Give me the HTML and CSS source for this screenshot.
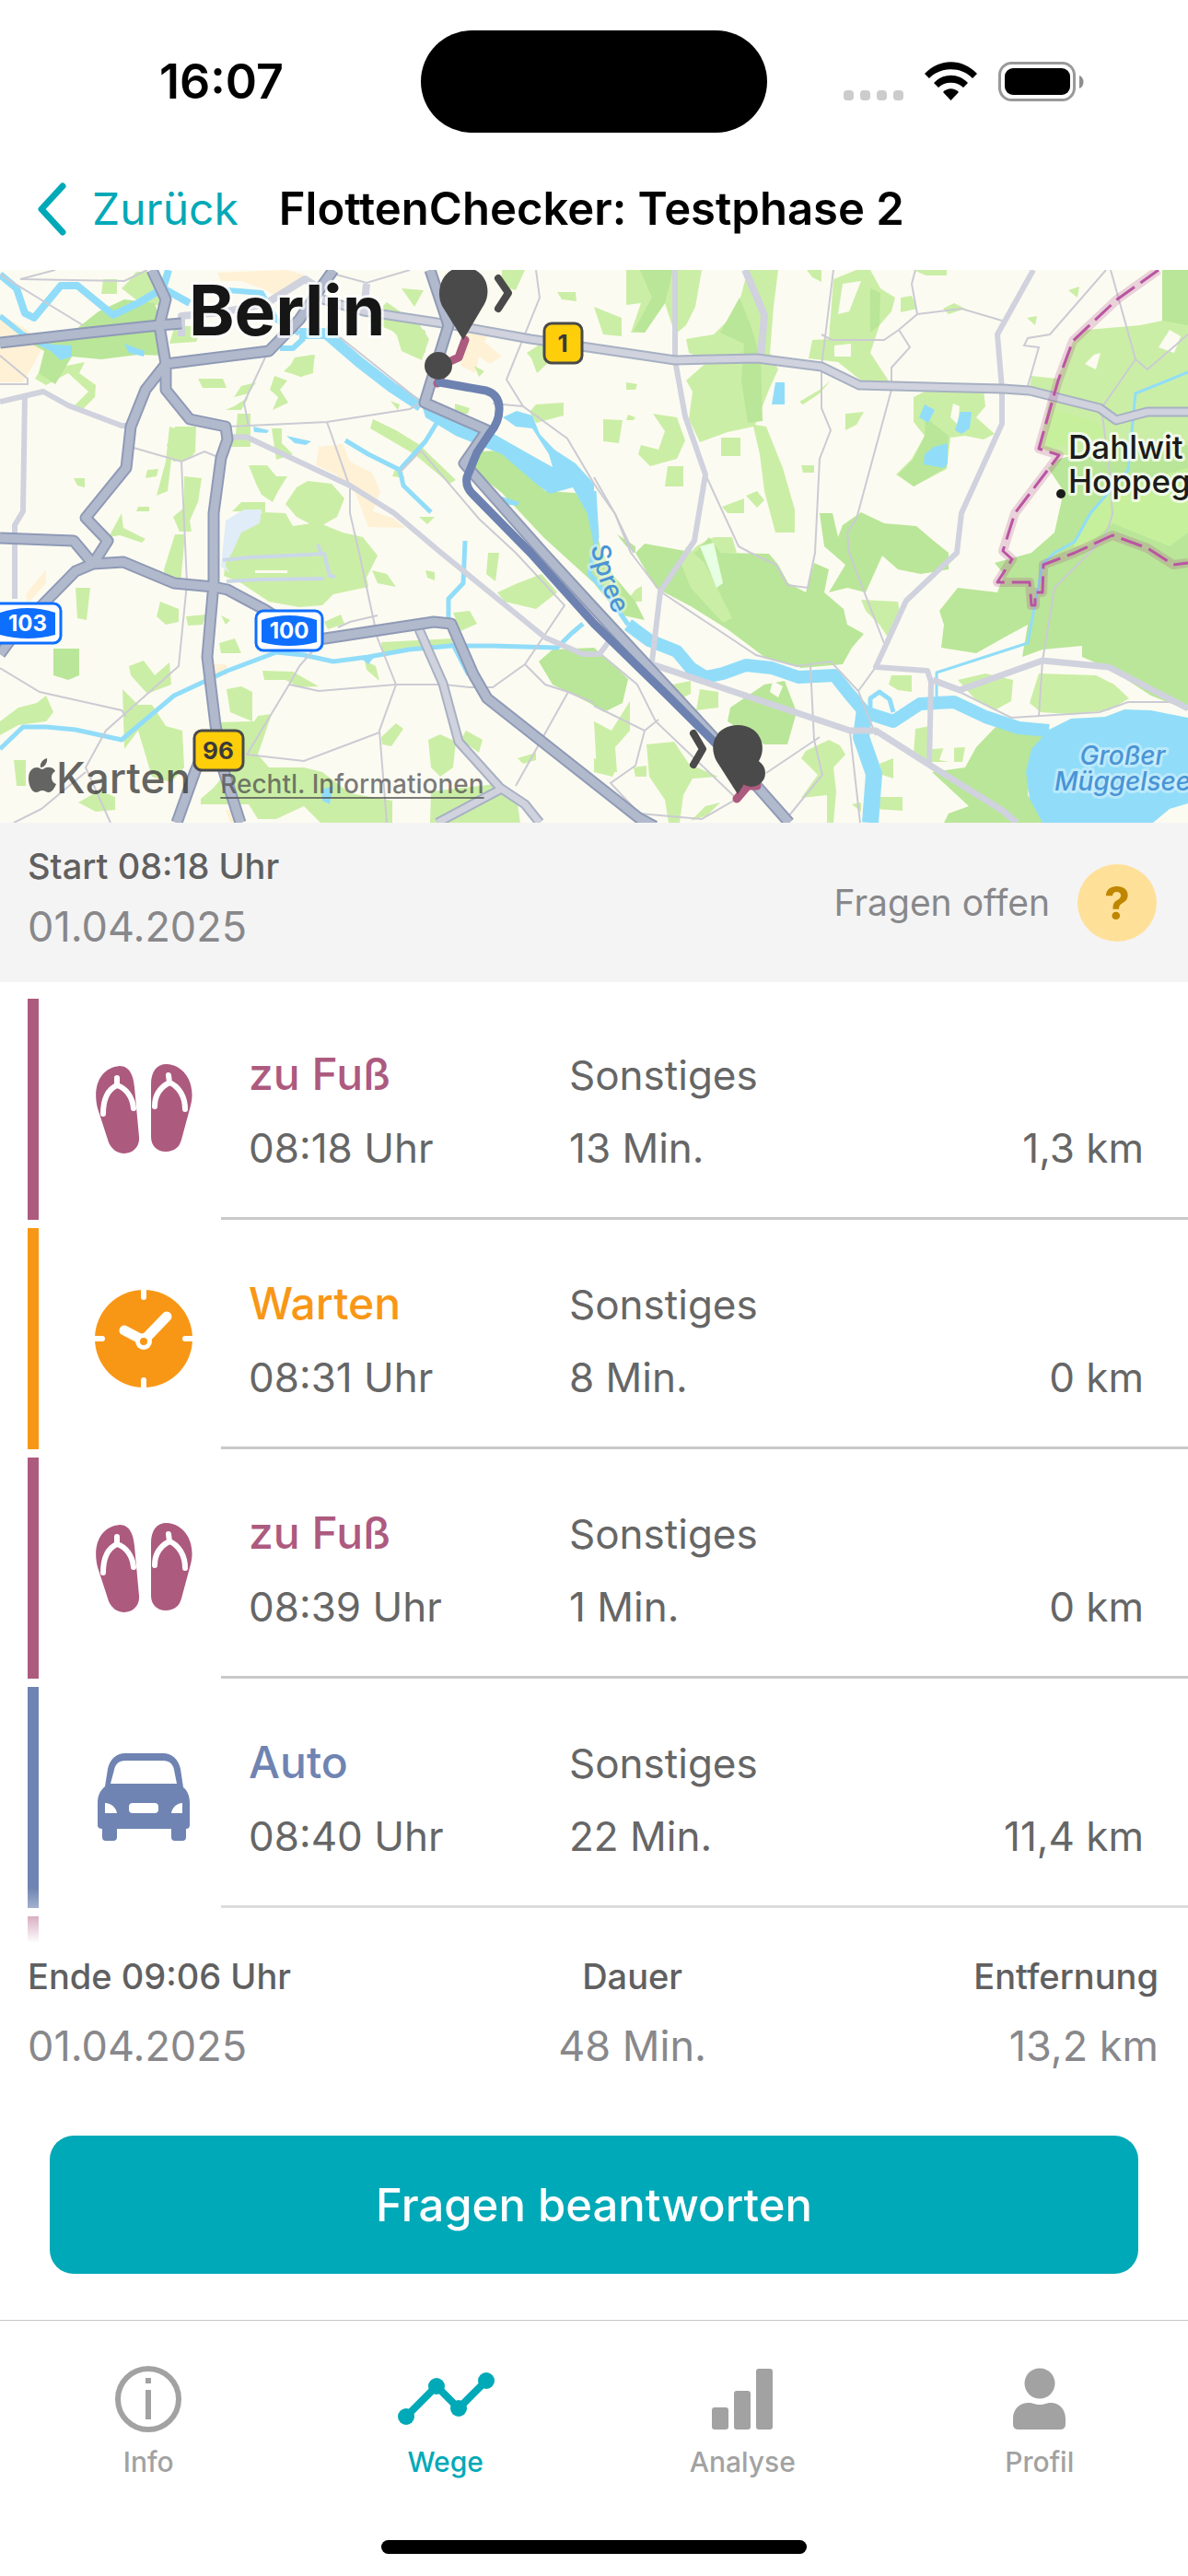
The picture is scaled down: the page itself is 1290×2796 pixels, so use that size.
FILE: index.html
```html
<!DOCTYPE html>
<html lang="de">
<head>
    <meta charset="UTF-8">
    <meta name="viewport" content="width=device-width, initial-scale=1">
    <title>FlottenChecker: Testphase 2</title>
    <link rel="stylesheet" href="styles.css">
</head>
<body>
    <!-- shared icons -->
    <svg class="sprite" aria-hidden="true">
        <symbol id="icon-shoes" viewBox="0 0 106 98">
            <path fill="currentColor" d="M27 2C38 2 42 13 43 25L48 79C49 90 41 97 32 97C24 97 18 92 15 85L3 48C-3 24 6 4 27 2Z"/>
            <path fill="currentColor" d="M78 0C67 0 61 8 61 22V79C61 89 68 95 77 95C86 95 92 90 94 82L104 45C110 22 98 1 78 0Z"/>
            <g fill="none" stroke="#fff" stroke-width="6" stroke-linecap="round" stroke-linejoin="round">
                <path d="M24 15V23C13 28 9 40 9 54M24 23C34 26 41 36 42 48"/>
                <path d="M80 12L81 20C71 25 65 34 65 46M81 20C91 24 98 35 98 49"/>
            </g>
        </symbol>
        <symbol id="icon-clock" viewBox="0 0 106 106">
            <circle cx="53" cy="53" r="53" fill="currentColor"/>
            <g fill="none" stroke="#fff" stroke-linecap="round">
                <path stroke-width="6" d="M53 -4V8M53 98V110M-4 53H8M98 53H110"/>
                <path stroke-width="11" d="M53 55L32 44M53 55L78 29"/>
            </g>
            <circle cx="53" cy="56" r="9" fill="#fff"/>
            <circle cx="53" cy="56" r="4" fill="currentColor"/>
        </symbol>
        <symbol id="icon-car" viewBox="0 0 100 96">
            <path fill="currentColor" fill-rule="evenodd" d="M30 0H71C81 0 88 7 90 17L93 37C98 41 100 47 100 54V78Q100 82 96 82V91Q96 95 92 95H84Q80 95 80 91V82H21V91Q21 95 17 95H9Q5 95 5 91V82Q0 82 0 78V54C0 47 2 41 8 36L11 17C13 7 20 0 30 0ZM30 8C23 8 19 12 18 18L14 33H86L83 18C82 12 78 8 71 8ZM8 54V65H21C20 59 15 54 8 54ZM92 54V65H80C81 59 86 54 92 54ZM38 54Q34 54 34 58V61Q34 65 38 65H62Q66 65 66 61V58Q66 54 62 54Z"/>
        </symbol>
    </svg>

    <div class="app">
        <div class="status-bar">
            <span class="clock">16:07</span>
            <span class="island"></span>
            <svg class="status-icons" width="264" height="44" viewBox="0 0 264 44" aria-hidden="true">
                <g fill="#ccc">
                    <rect x="3" y="31" width="11" height="11" rx="4"/>
                    <rect x="21" y="31" width="11" height="11" rx="4"/>
                    <rect x="39" y="31" width="11" height="11" rx="4"/>
                    <rect x="57" y="31" width="11" height="11" rx="4"/>
                </g>
                <path d="M91 13C107-4 132-4 148 13L143 18C131 5 108 5 96 18Z"/>
                <path d="M101 23C111 12 128 12 138 23L133 28C126 21 113 21 106 28Z"/>
                <path d="M111 33C116 28 123 28 128 33L119.500 42Z"/>
                <rect x="172.500" y="1.500" width="81" height="40" rx="13" fill="none" stroke="#999" stroke-width="3"/>
                <rect x="178" y="7" width="71" height="29" rx="9"/>
                <path fill="#8e8e8e" d="M259 15C265 17 265 27 259 29Z"/>
            </svg>
        </div>

        <header class="nav-bar">
            <a class="back" href="#">
                <svg width="32" height="58" viewBox="0 0 32 58" aria-hidden="true"><path d="M28 4L5 29L28 54" fill="none" stroke="currentColor" stroke-width="7" stroke-linecap="round" stroke-linejoin="round"/></svg>
                Zurück
            </a>
            <h1>FlottenChecker: Testphase 2</h1>
        </header>

        <div class="map">
            <svg class="map-canvas" viewBox="0 0 1290 600" preserveAspectRatio="xMidYMid slice" role="img" aria-label="Karte">
                <rect width="1290" height="600" fill="#fcfbf1"/>

                <!-- built-up areas -->
                <g fill="#fff1d6">
                    <path d="M0 48L25 62L48 80L38 100L25 122H0Z"/>
                    <path d="M236 3L310 0L330 5L318 15L300 28L284 20L262 12L240 12Z"/>
                    <path d="M346 192L372 189L380 208L404 220L413 240L405 262L428 270L440 280L400 279L385 240L365 222L343 212Z"/>
                    <path d="M505 60L535 62L526 78L545 94L532 102L520 94L516 112L500 104Z"/>
                    <path d="M28 352L50 325L50 340L30 362Z"/>
                    <path d="M232 428H246V440H232ZM245 586H256V600H250Z"/>
                </g>

                <!-- light green -->
                <g fill="#cbeea6">
                    <path d="M112 10H127V26H110ZM148 2H165L180 40L150 34L132 20L140 12Z"/>
                    <path d="M190 60L220 62L213 78L184 80ZM340 92L320 95L312 110L326 116L340 112Z"/>
                    <path d="M43 110L92 100L86 112L104 125L103 138L88 153L78 150L96 132L74 112L50 125L38 118Z"/>
                    <path d="M215 118L242 118L246 128L220 128ZM262 126L278 122L270 134L254 138ZM254 148L270 138L262 152H245Z"/>
                    <path d="M298 115L312 120L304 130L313 144L296 152L302 138L293 130Z"/>
                    <path d="M324 95L342 92L340 108L328 116L308 110ZM395 40H410L462 66V90L440 80L420 60Z"/>
                    <path d="M258 156H272V192H243V178H256ZM295 172H306V188L318 200L300 206Z"/>
                    <path d="M190 170L213 170L212 198L204 206L188 208L181 190ZM180 208L184 170L190 172L182 240L170 245Z"/>
                    <path d="M200 224L219 226L215 252L206 272L208 284H195L188 268L200 258Z"/>
                    <path d="M270 212H290L300 224H312L302 240L296 252L284 244L278 232Z"/>
                    <path d="M322 236L334 229L360 232L374 248L366 268L345 280L322 268L310 254Z"/>
                    <path d="M252 262L262 252L288 252V263Z"/>
                    <path d="M285 263L310 264L318 278L345 274L372 285L394 290L410 310L398 334L400 344L362 352L350 364L325 366L292 360L262 340L243 332L247 300L262 280Z"/>
                    <path d="M132 264L134 280L158 292L154 296L130 288L118 290ZM150 257H162V262H148ZM80 226H92V236L84 234Z"/>
                    <path d="M160 217L172 216L170 224L158 226ZM190 287H201L196 340H180L178 325Z"/>
                    <path d="M82 345H98L94 380L84 378Z"/>
                    <path d="M174 360L194 368V382L180 385L170 376ZM140 430L156 424L168 440L184 426L186 450L160 460L142 440Z"/>
                    <path d="M133 455L150 472L165 472L180 495L198 500L200 540L186 556L165 550L150 500L135 520Z"/>
                    <path d="M246 455L262 452L274 458V490L250 480ZM285 435L318 436L346 452L325 453L310 445H287Z"/>
                    <path d="M238 491L276 490L280 484L295 482L280 526L292 540H330L350 545L380 568L426 576V600H348L330 582L300 596H280L270 580H218V574L232 562L246 545Z"/>
                    <path d="M0 490L20 475L40 470L50 462L58 480L50 490L20 494L0 505Z"/>
                    <path d="M15 532H28V560H18ZM85 578L108 565L125 572V586L104 588Z"/>
                    <path d="M202 376L224 374L220 385L204 386ZM240 375L250 380L245 385ZM352 382L370 374L374 384L356 390Z"/>
                    <path d="M404 326L420 330L430 344L410 340ZM462 326L472 328V337L464 334ZM396 424L408 430L412 446L398 434Z"/>
                    <path d="M414 404L492 400L490 408L415 416ZM238 405L255 400L262 416H240Z"/>
                    <path d="M468 566L538 558L562 580L565 600H467ZM414 507L430 492L438 498L425 517L415 515Z"/>
                    <path d="M465 510L478 504L495 512L492 540L478 550L468 540ZM506 500L524 510L520 524L500 510ZM562 530L582 524V532L568 536Z"/>
                    <path d="M492 372L510 370L518 384L500 392ZM540 350L562 340L588 330L605 350L582 368L548 360ZM530 307H542L538 338L528 330Z"/>
                    <path d="M420 35L456 60L466 75L458 98L436 88L430 68L400 55ZM436 20L460 22L450 40ZM405 162L430 174L456 190L470 204L495 228L488 232L450 200L402 172Z"/>
                    <path d="M424 142L434 146L432 152ZM494 145L510 150L508 156H494ZM515 104L526 110L520 116Z"/>
                    <path d="M430 214L440 226L426 224ZM455 268L472 268L464 276Z"/>
                    <path d="M545 0H570L560 22L545 18ZM605 24H625L626 34L610 32ZM582 146L612 144V158L582 166L575 154ZM572 90L600 72L590 90L596 100L583 112L577 96Z"/>
                    <path d="M645 40L675 52V72L655 70ZM655 162L676 163L672 188L655 186ZM680 122L692 124L690 130H680Z"/>
                    <path d="M680 0H745L762 0L755 40L745 60L733 70L722 36L700 68L685 68L696 36L680 38Z"/>
                    <path d="M709 156L735 160L744 185L735 205L706 213L693 200L696 190L715 195L722 175Z"/>
                    <path d="M725 213H742V235H722ZM783 182H804V202H783ZM682 157L690 160L688 163H680Z"/>
                    <path d="M745 75L775 70L800 45L812 0H845L840 40L836 90L845 108L835 130L820 168L832 170L850 215L863 260V285H842L830 240L825 200L818 170L790 176L760 187L748 162L752 132L745 120L770 98L748 90Z"/>
                    <path d="M905 10L930 0H945L956 20L972 30L968 45L955 60L945 90L968 125L935 120L910 100L878 96L882 76L900 75Z"/>
                    <path d="M876 0H892V13L882 8ZM978 30L990 28L996 42L978 46ZM992 0H1028V6H1005ZM1024 42L1036 36L1048 42L1030 48Z"/>
                    <path d="M918 156L938 154L930 168L918 174ZM870 212H884V220H872ZM868 143L890 130L902 120L890 134L872 146Z"/>
                    <path d="M784 257L808 248L808 264L790 264ZM810 245L822 240L830 250L822 258ZM756 300L775 290L795 290L800 307H750Z"/>
                    <path d="M992 138L1006 131H1068L1070 148L1060 160L1080 178L1068 184L1048 180L1032 182L1028 216L992 235L973 222L990 205L1004 180L992 165Z"/>
                    <path d="M1160 22L1172 18L1170 30ZM1115 52L1126 50L1124 60Z"/>
                    <path d="M1165 78L1180 65L1238 60L1262 55L1266 0H1290V210L1212 205L1145 200L1128 192L1140 140L1118 128L1120 115L1148 118Z"/>
                    <path d="M690 347L697 343V360H680ZM760 455L780 458L780 475L756 478ZM730 450L750 446V460L730 470Z"/>
                    <path d="M935 358L975 360L978 378L965 400L955 385L940 370ZM968 440L990 440V458L975 456L965 450Z"/>
                    <path d="M1040 445L1070 438L1100 445L1098 468L1080 478L1058 465Z"/>
                    <path d="M1128 438L1190 440L1210 450L1226 465L1204 478L1160 482L1130 480L1118 470ZM994 498L1010 495L1012 520L1048 518L1045 534H1010L992 525Z"/>
                    <path d="M645 490L664 500L684 468L684 500L668 518L670 545H648ZM645 530L670 540L665 550L645 545Z"/>
                    <path d="M702 515L732 512L748 536L780 550L752 552L742 570L738 600H726L722 575L705 550ZM688 540L702 538V550H690Z"/>
                    <path d="M875 522L900 510L912 516L918 526L905 540L908 566L905 600H898V570L870 573L888 548L870 530Z"/>
                    <path d="M955 536L970 530V552L958 548ZM952 572L980 572V587L950 585ZM925 580L935 578V588ZM766 582L782 578L768 592L750 598Z"/>
                </g>

                <!-- woods and parks -->
                <g fill="#b9e698">
                    <path d="M78 68L107 45L135 32L168 36L174 55L180 93L150 92L110 97L78 94L60 124L42 112L48 88L30 78L70 76Z"/>
                    <path d="M518 197L545 196L575 224L592 240L625 242L640 262L652 300L665 330L690 360L700 380L672 374L645 340L590 290L545 242L512 216Z"/>
                    <path d="M585 425L600 412L645 410L668 430L682 444L676 470L656 480L640 470L600 450Z"/>
                    <path d="M695 0H731L722 36L700 68L688 66L708 30ZM803 30L815 60L826 95L828 164L812 166L805 120L808 80L782 68ZM945 20L956 25L955 60L945 68Z"/>
                    <path d="M1005 160L1030 180L1028 214L992 235L975 222L992 205L1004 180ZM1262 0H1290V60L1262 55Z"/>
                    <path d="M690 307L700 297L755 307L770 290L782 307L835 308L845 320L856 340L875 350L884 318L900 325L895 350L916 368L920 385L938 395L925 410L915 428L870 432L830 420L790 390L750 365L712 345Z"/>
                    <path d="M915 277L935 263L960 275L995 278L1015 295L1030 307L1030 325L1000 330L975 325L958 310L940 350L920 345L900 350L918 320L895 300L890 264L904 264L910 290Z"/>
                    <path d="M1150 205L1215 190L1290 190V478L1250 462L1205 433L1175 420L1175 408L1132 412L1110 420L1116 385L1092 398L1060 416L1022 410L1025 385L1020 370L1040 345L1083 350L1090 330L1080 318L1120 307L1145 285L1155 240L1138 215Z"/>
                    <path d="M1012 545L1048 540L1060 518L1085 492L1100 500L1138 503L1120 530L1116 570L1135 600H1025L1030 590L1052 582Z"/>
                    <path d="M793 475L830 450L852 446L865 480L855 515L830 515L790 490ZM670 287L690 300L690 307L680 300Z"/>
                    <path d="M58 411H86V440L74 445L58 440Z"/>
                </g>
                <g fill="#c6f09c">
                    <path d="M1200 240L1290 215V285L1270 300L1208 275L1180 300L1165 300ZM1140 150L1190 165L1200 180L1135 195Z"/>
                    <path d="M745 300L765 318L795 378L785 383L750 345L740 320Z" fill="#cbeea6"/>
                </g>
                <path d="M839 446L850 452L845 464L836 458ZM1024 520L1036 512V535L1020 532Z" fill="#fcfbf1"/>
                <path d="M1270 65L1282 72L1275 90L1258 84ZM1188 92L1195 90L1190 108L1178 102ZM1035 145L1042 148L1040 168L1032 160Z" fill="#fcfbf1"/>
                <path d="M915 15L935 12L922 45L910 48ZM906 82L924 80V94H906Z" fill="#fcfbf1"/>
                <path d="M760 300L775 296L785 340L778 345Z" fill="#e7ffe2"/>

                <!-- Tempelhof field -->
                <path d="M245 272L265 260H284L282 275L262 285L252 307L244 320L250 330L240 322Z" fill="#e0ecf7"/>
                <path d="M242 315L270 312L314 310L352 308L358 332L364 333M246 338L283 336L352 335M345 298L350 310" fill="none" stroke="#cbd8e8" stroke-width="4"/>
                <path d="M277 326H312V329H277Z" fill="#fcfbf1"/>

                <!-- water -->
                <g fill="none" stroke="#91ddf9" stroke-width="6" stroke-linejoin="round">
                    <path stroke-width="8" d="M0 5L18 20L27 47L37 52L66 17H84L123 49L150 36L177 20L183 0M177 20L206 36"/>
                    <path d="M0 50L25 70L60 86M247 22L284 25L300 54L325 69M304 85H318L330 74"/>
                    <path stroke-width="12" d="M325 69H354L390 100L425 127L457 148"/>
                    <path stroke-width="5" d="M375 185L400 200L434 217L462 186L478 160M434 217L438 234L468 263M505 294L503 340L487 357V380"/>
                    <path stroke-width="14" d="M682 385L705 402L735 414L750 432L766 442L785 438L810 429L838 432L867 442L906 440L922 460L939 480L970 490L999 471L1036 469L1070 485L1106 497L1139 500"/>
                    <path stroke-width="18" d="M939 477L935 507L949 547L945 600"/>
                    <path stroke-width="5" d="M945 480L945 465L955 458L966 466L970 480"/>
                    <path stroke-width="5" d="M0 520L25 496H50L82 499L132 510L189 462L247 435L300 415L330 418L362 425L400 420L444 412L490 408L535 408L605 410L620 395L633 384"/>
                    <path stroke-width="3" d="M1290 111L1233 134L1225 217L1184 264L1167 295L1145 307L1132 319L1116 405L1017 437V464M490 405L508 440"/>
                    <path stroke-width="5" d="M645 240L648 290L640 330L658 350L682 385"/>
                </g>
                <g fill="#91ddf9">
                    <path d="M38 80L78 82V94L66 98L55 88ZM135 80L157 88L156 94L140 90Z"/>
                    <path d="M457 143L531 175L575 200L600 214L596 200L578 172L560 170L546 160L561 153L578 158L586 178L602 195L625 210L645 232V300L638 265L622 236L597 243L582 232L545 200L495 180L462 160Z"/>
                    <path d="M275 170L292 174L290 177L276 176ZM311 180L338 186L332 190L320 188ZM545 246L564 252L562 256L546 254Z"/>
                    <path d="M842 122H852V146H838ZM1004 146L1015 152L1008 166L998 160ZM1043 154H1055L1053 172L1044 178L1037 174ZM1014 192L1029 188V210L1025 215L1003 211L1004 200Z"/>
                    <path d="M349 564L362 560L358 580L350 576ZM390 420L408 418L400 428Z"/>
                    <path d="M1139 499L1163 487L1200 485L1221 477L1250 478L1290 486V579L1270 585L1252 600H1132L1118 574L1114 545L1120 520Z"/>
                </g>

                <!-- minor streets -->
                <g fill="none" stroke="#cbcbd4" stroke-width="2">
                    <path d="M0 5L90 60M22 10L60 0M22 10L135 12L160 0M0 93L30 118V124H0M365 5L398 14L445 0"/>
                    <path d="M288 95L265 144L270 170M247 170L355 165L445 151L460 143M355 165L380 236V264L390 307L410 400L430 450L412 500L420 600"/>
                    <path d="M145 193L197 208L222 197L234 202M197 208L203 340L194 430L115 500L93 540L120 600M0 432L43 458L132 478L137 485M45 585L93 545M15 600L45 585"/>
                    <path d="M354 61L457 143M457 196L520 270L560 307L613 364L570 428L535 453H510L482 450L430 450L346 457L314 450L268 526L330 533L412 502"/>
                    <path d="M457 196L435 219M314 450L325 430L340 413M367 388L380 382L410 375"/>
                    <path d="M582 0L586 30L550 119L568 148L616 183L645 232L668 265L688 307M535 145L568 148M570 428L592 450L617 458L645 470M617 458L560 560"/>
                    <path d="M905 0L892 105V150L902 174L890 205L885 307L877 345L855 342L843 320L815 307L802 300L766 222M892 70L903 76H960L976 65L996 48L990 15L994 0M996 48L1044 42L1088 55"/>
                    <path d="M976 65L988 84L968 106V130L930 270L920 285L922 307L960 405M1201 0L1140 70L1116 74L1112 82L1128 84L1116 126"/>
                    <path d="M1206 0L1233 97L1246 108L1290 70M1233 97L1196 150L1205 220L1208 265L1200 290L1145 345L1132 424L1128 485"/>
                    <path d="M717 349L821 418L865 430L902 425L932 457L951 505M880 430L884 510L893 548L857 592M932 457L951 431M923 502L934 600"/>
                    <path d="M650 415L692 450L712 490L800 574L762 596L694 590L663 557L690 538L700 500L645 473M832 546L890 507M700 500L715 488M1042 458L1098 486L1194 480L1225 469H1275"/>
                    <path d="M645 225L668 265L685 307M685 307L717 349"/>
                </g>

                <!-- secondary roads -->
                <g fill="none" stroke="#d0d2de" stroke-width="6" stroke-linejoin="round">
                    <path d="M0 143L47 132L74 147L132 169H140M27 135L25 262L16 277V357"/>
                    <path d="M247 182L267 181L380 234L428 264L479 307L592 399L633 417H651L665 398"/>
                    <path d="M733 0V98L744 159L766 222L754 294L717 349L708 425"/>
                    <path stroke-width="8" d="M809 0L830 49L826 94"/>
                    <path d="M1122 0L1083 70L1088 129V167L1044 264L1039 307L984 359L951 431L1007 435L1011 447L1009 537"/>
                    <path stroke-width="7" d="M705 427L923 500H951L1009 537L1089 587L1104 600M1013 445L1042 456L1132 424L1204 431L1290 476"/>
                    <path stroke-width="8" d="M197 72V50L240 46L288 37L331 10L350 22M395 45L398 15"/>
                </g>

                <!-- main roads and motorways: casing, then fill -->
                <defs>
                    <path id="main-roads" d="M350 32L395 45L487 59L576 75L645 85L733 98L822 96L892 105L933 125L1089 129L1118 131L1194 150L1212 163L1246 154H1290M455 390L481 449L498 512L543 562L570 580L586 600M543 564L475 600"/>
                    <path id="motorways" d="M0 79L97 68L173 60L197 58M165 0L180 32L173 60L180 102L292 88L325 54L350 17L362 0M180 102L158 130L142 170L137 215L93 269L117 294L101 319M0 291L80 294L101 319M180 102V130L206 162L245 170L247 184L240 204L232 264V340L225 420L234 494L243 544L261 600M218 530L212 544L192 600M0 417L20 390L82 327L101 319L134 317L189 340L232 344L247 347L288 369L340 402L471 382L490 384L514 439L529 465L694 595L711 604M467 0L487 60L461 144L529 174L504 210L590 307L645 367L781 514L857 600"/>
                </defs>
                <g fill="none" stroke-linejoin="round">
                    <use href="#main-roads" stroke="#a7b1c3" stroke-width="11"/>
                    <use href="#main-roads" stroke="#d0d2de" stroke-width="7"/>
                    <use href="#motorways" stroke="#8f9ab6" stroke-width="13"/>
                    <use href="#motorways" stroke="#b1b9cd" stroke-width="9"/>
                </g>

                <!-- city border -->
                <g fill="none" stroke-linejoin="round">
                    <path stroke="#b0508f" stroke-opacity=".24" stroke-width="10" d="M1258 0L1213 32L1165 77L1149 120L1128 194L1150 201L1102 264L1089 305L1099 314L1083 339H1118L1120 364H1124V350H1132L1133 320L1167 307L1208 288L1246 302L1274 320L1290 318"/>
                    <path stroke="#ba55a2" stroke-width="3" stroke-dasharray="24 8" d="M1258 0L1213 32L1165 77L1149 120L1128 194L1150 201L1102 264L1089 305L1099 314L1083 339H1118L1120 364H1124V350H1132L1133 320L1167 307L1208 288L1246 302L1274 320L1290 318"/>
                </g>

                <!-- recorded trip -->
                <g fill="none" stroke-width="9" stroke-linecap="round" stroke-linejoin="round">
                    <path stroke="#ad5a7f" d="M505 76L498 95L487 100L475 123M822 560H812L800 574"/>
                    <path stroke="#6d82b0" d="M477 122L528 131Q543 136 542 152Q542 165 532 177L518 198L507 225Q505 236 514 244L576 307L645 384L727 464L777 514"/>
                </g>
                <g fill="#4a4a4a">
                    <path d="M503 76L480 39C472 23 480 -3 503 -3C526 -3 535 20 526 37Z"/>
                    <circle cx="476" cy="104" r="15"/>
                    <path d="M801 569L778 533C768 514 779 494 801 494C824 494 834 516 824 533Z"/>
                    <circle cx="816" cy="546" r="15"/>
                </g>
                <path fill="none" stroke="#4a4a4a" stroke-width="8" stroke-linecap="round" stroke-linejoin="round" d="M541 9L552 25L541 42M753 503L763 520L753 537"/>

                <!-- road shields -->
                <g class="shield">
                    <rect x="591" y="58" width="41" height="43" rx="8" fill="#ffce0a" stroke="#4a4a4a" stroke-width="3"/>
                    <text x="611" y="89">1</text>
                    <rect x="211" y="500" width="53" height="43" rx="8" fill="#ffce0a" stroke="#4a4a4a" stroke-width="3"/>
                    <text x="237" y="531">96</text>
                    <rect x="-8" y="362" width="74" height="43" rx="8" fill="#fff" stroke="#0e6fff" stroke-width="3"/>
                    <path fill="#0e6fff" d="M0 372Q30 362 60 372V396Q30 404 0 396Z"/>
                    <text class="on-blue" x="30" y="392">103</text>
                    <rect x="278" y="370" width="72" height="43" rx="8" fill="#fff" stroke="#0e6fff" stroke-width="3"/>
                    <path fill="#0e6fff" d="M284 380Q314 370 344 380V404Q314 412 284 404Z"/>
                    <text class="on-blue" x="314" y="400">100</text>
                </g>

                <!-- place names -->
                <text class="label city" x="205" y="71">Berlin</text>
                <text class="label town" x="1160" y="205">Dahlwit</text>
                <text class="label town" x="1160" y="242">Hoppeg</text>
                <circle cx="1152" cy="243" r="5" fill="#1b1b1b"/>
                <path id="spree" fill="none" d="M642 300Q650 350 678 392"/>
                <text class="label river"><textPath href="#spree">Spree</textPath></text>
                <text class="label lake" x="1219" y="537">Großer</text>
                <text class="label lake" x="1219" y="565">Müggelsee</text>
            </svg>
            <div class="map-credits">
                <span class="map-brand">
                    <svg width="30" height="38" viewBox="0 0 30 38" aria-hidden="true"><path fill="currentColor" d="M20 0C21 5 17 10 13 10C12 5 16 1 20 0ZM15 12C17 12 19 9 23 10Q27 10 29 14C23 17 24 26 30 28C28 33 25 37 22 37C19 37 18 35 15 35C12 35 11 37 8 37C3 37 0 28 0 22C0 13 5 10 9 10C12 10 13 12 15 12Z"/></svg>Karten</span>
                <a href="#">Rechtl. Informationen</a>
            </div>
        </div>

        <section class="trip-start">
            <div class="stat">
                <span class="stat-label">Start 08:18 Uhr</span>
                <span class="stat-value">01.04.2025</span>
            </div>
            <span class="open-questions">Fragen offen</span>
            <button class="help" type="button">?</button>
        </section>

        <ul class="legs">
            <li class="leg walk">
                <svg class="leg-icon" width="106" height="98"><use href="#icon-shoes"/></svg>
                <div class="leg-info">
                    <span class="leg-mode">zu Fuß</span><span>Sonstiges</span>
                    <span>08:18 Uhr</span><span>13 Min.</span><span>1,3 km</span>
                </div>
            </li>
            <li class="leg wait">
                <svg class="leg-icon" width="106" height="106"><use href="#icon-clock"/></svg>
                <div class="leg-info">
                    <span class="leg-mode">Warten</span><span>Sonstiges</span>
                    <span>08:31 Uhr</span><span>8 Min.</span><span>0 km</span>
                </div>
            </li>
            <li class="leg walk">
                <svg class="leg-icon" width="106" height="98"><use href="#icon-shoes"/></svg>
                <div class="leg-info">
                    <span class="leg-mode">zu Fuß</span><span>Sonstiges</span>
                    <span>08:39 Uhr</span><span>1 Min.</span><span>0 km</span>
                </div>
            </li>
            <li class="leg car">
                <svg class="leg-icon" width="100" height="96"><use href="#icon-car"/></svg>
                <div class="leg-info">
                    <span class="leg-mode">Auto</span><span>Sonstiges</span>
                    <span>08:40 Uhr</span><span>22 Min.</span><span>11,4 km</span>
                </div>
            </li>
            <li class="leg walk"></li>
        </ul>

        <section class="trip-end">
            <div class="stat">
                <span class="stat-label">Ende 09:06 Uhr</span>
                <span class="stat-value">01.04.2025</span>
            </div>
            <div class="stat center">
                <span class="stat-label">Dauer</span>
                <span class="stat-value">48 Min.</span>
            </div>
            <div class="stat right">
                <span class="stat-label">Entfernung</span>
                <span class="stat-value">13,2 km</span>
            </div>
        </section>

        <button class="answer" type="button">Fragen beantworten</button>

        <nav class="tabs">
            <a class="tab" href="#">
                <svg width="106" height="74" viewBox="0 0 106 74" aria-hidden="true">
                    <circle cx="53" cy="37" r="33" fill="none" stroke="currentColor" stroke-width="6"/>
                    <path fill="currentColor" d="M50 14H56V20H50ZM50 27H56V59H50Z"/>
                </svg>
                Info
            </a>
            <a class="tab active" href="#">
                <svg width="106" height="74" viewBox="0 0 106 74" aria-hidden="true">
                    <path d="M10 56L43 23L67 47L97 17" fill="none" stroke="currentColor" stroke-width="8"/>
                    <g fill="currentColor"><circle cx="10" cy="56" r="9"/><circle cx="43" cy="23" r="9"/><circle cx="67" cy="47" r="9"/><circle cx="97" cy="17" r="9"/></g>
                </svg>
                Wege
            </a>
            <a class="tab" href="#">
                <svg width="106" height="74" viewBox="0 0 106 74" aria-hidden="true">
                    <g fill="currentColor"><rect x="20" y="46" width="18" height="24" rx="3"/><rect x="44" y="28" width="18" height="42" rx="3"/><rect x="68" y="4" width="18" height="66" rx="3"/></g>
                </svg>
                Analyse
            </a>
            <a class="tab" href="#">
                <svg width="106" height="74" viewBox="0 0 106 74" aria-hidden="true">
                    <circle cx="53" cy="20" r="16.500" fill="currentColor"/>
                    <path fill="currentColor" d="M24 58C24 48 31 41 41 41C46 41 47 43 53 43C59 43 60 41 65 41C74 41 81 48 81 58V64Q81 70 75 70H30Q24 70 24 64Z"/>
                </svg>
                Profil
            </a>
        </nav>
        <div class="home-indicator"></div>
    </div>
</body>
</html>
```

FILE: styles.css
```css
* {
    box-sizing: border-box;
}
body {
    margin: 0;
    background: #fff;
    color: #000;
    font-family: Inter, "Liberation Sans", sans-serif;
}
a {
    color: inherit;
    text-decoration: none;
}
button {
    border: none;
    font-family: inherit;
    cursor: pointer;
}
.sprite {
    display: none;
}
.app {
    display: flex;
    flex-direction: column;
    height: 100vh;
}

/* status bar */
.status-bar {
    display: grid;
    grid-template-columns: 1fr auto 1fr;
    align-items: center;
    padding-top: 33px;
}
.clock {
    padding-left: 173px;
    font-size: 52px;
    font-weight: 600;
}
.island {
    width: 376px;
    height: 111px;
    border-radius: 56px;
    background: #000;
}
.status-icons {
    justify-self: end;
    margin-right: 113px;
}

/* navigation */
.nav-bar {
    display: flex;
    align-items: center;
    gap: 44px;
    padding: 48px 40px 32px;
}
.nav-bar h1 {
    margin: 0;
    font-size: 49px;
    line-height: 69px;
    font-weight: 600;
}
.back {
    display: flex;
    align-items: center;
    gap: 28px;
    color: #00a9b7;
    font-size: 48px;
    line-height: 69px;
}

/* map */
.map {
    position: relative;
    flex: none;
}
.map-canvas {
    display: block;
    width: 100%;
    height: 600px;
}
.map-credits {
    position: absolute;
    left: 31px;
    bottom: 22px;
    display: flex;
    align-items: baseline;
    gap: 32px;
    color: rgba(50, 50, 50, 0.75);
}
.map-brand {
    font-size: 46px;
    line-height: 54px;
    font-weight: 500;
}
.map-credits a {
    font-size: 28px;
    font-weight: 500;
    color: rgba(80, 80, 80, 0.75);
    text-decoration: underline;
    text-underline-offset: 4px;
}
.label {
    paint-order: stroke;
    stroke: rgba(255, 255, 255, 0.75);
    stroke-width: 6px;
    stroke-linejoin: round;
}
.city {
    fill: #161616;
    font-size: 75px;
    font-weight: 700;
}
.town {
    fill: #1b1b1b;
    font-size: 35px;
    font-weight: 500;
}
.river,
.lake {
    fill: #4a94d6;
    stroke-opacity: 0.5;
    font-size: 28px;
    font-weight: 500;
}
.lake {
    font-style: italic;
    text-anchor: middle;
}
.shield text {
    fill: #3a3a3a;
    font-size: 26px;
    font-weight: 700;
    text-anchor: middle;
}
.shield .on-blue {
    fill: #fff;
    font-size: 24px;
}

/* trip summary */
.trip-start {
    display: flex;
    align-items: center;
    padding: 0 34px 0 30px;
    background: #f4f4f4;
}
.trip-start .stat {
    padding: 17px 0 27px;
}
.stat {
    display: flex;
    flex-direction: column;
    gap: 2px;
}
.stat-label {
    color: #606060;
    font-size: 38px;
    line-height: 60px;
    font-weight: 500;
}
.stat-value {
    color: #88888b;
    font-size: 45px;
    line-height: 67px;
}
.open-questions {
    margin-left: auto;
    margin-right: 30px;
    color: #88888b;
    font-size: 39px;
}
.help {
    width: 86px;
    height: 84px;
    padding: 0;
    border-radius: 50%;
    background: #ffe099;
    color: #bf8600;
    font-size: 50px;
    font-weight: 700;
}

/* legs of the trip */
.legs {
    position: relative;
    flex: 1;
    min-height: 0;
    margin: 0;
    padding: 18px 0 0 30px;
    overflow: hidden;
    list-style: none;
}
.legs::after {
    content: "";
    position: absolute;
    left: 0;
    right: 0;
    bottom: 0;
    height: 60px;
    background: linear-gradient(rgba(255, 255, 255, 0), #fff);
}
.leg {
    display: grid;
    grid-template-columns: 198px 1fr;
    align-items: center;
    height: 240px;
    margin-bottom: 9px;
    border-left: 12px solid currentColor;
}
.walk {
    color: #ad5a7f;
}
.wait {
    color: #f89716;
}
.car {
    color: #6f84b2;
}
.leg-icon {
    justify-self: center;
    margin-left: 30px;
}
.leg-info {
    display: grid;
    grid-template-columns: 348px 1fr auto;
    align-content: center;
    align-items: baseline;
    gap: 19px 0;
    height: 100%;
    padding: 6px 48px 0 30px;
    border-bottom: 3px solid #c9c9c9;
    color: #666;
    font-size: 44px;
    line-height: 60px;
}
.leg-mode {
    font-size: 48px;
    font-weight: 500;
}
.leg-info span:nth-child(2) {
    grid-column: span 2;
}
.walk .leg-mode {
    color: #ad5a7f;
}
.wait .leg-mode {
    color: #f89716;
}
.car .leg-mode {
    color: #6f84b2;
}

/* totals */
.trip-end {
    display: flex;
    justify-content: space-between;
    padding: 6px 32px 0 30px;
}
.trip-end .stat {
    gap: 12px;
}
.center {
    align-items: center;
}
.right {
    align-items: flex-end;
}
.answer {
    flex: none;
    height: 150px;
    margin: 64px 54px 50px;
    border-radius: 26px;
    background: #00a9b7;
    color: #fff;
    font-size: 49px;
    font-weight: 500;
}

/* tab bar */
.tabs {
    display: grid;
    grid-template-columns: repeat(4, 1fr);
    padding: 48px 0 66px;
    border-top: 1px solid #c8c8c8;
}
.tab {
    display: flex;
    flex-direction: column;
    align-items: center;
    gap: 12px;
    color: #a2a2a2;
    font-size: 30px;
    line-height: 38px;
    font-weight: 500;
}
.tab.active {
    color: #00a9b7;
}
.home-indicator {
    flex: none;
    width: 462px;
    height: 15px;
    margin: 0 auto 24px;
    border-radius: 8px;
    background: #000;
}
```
